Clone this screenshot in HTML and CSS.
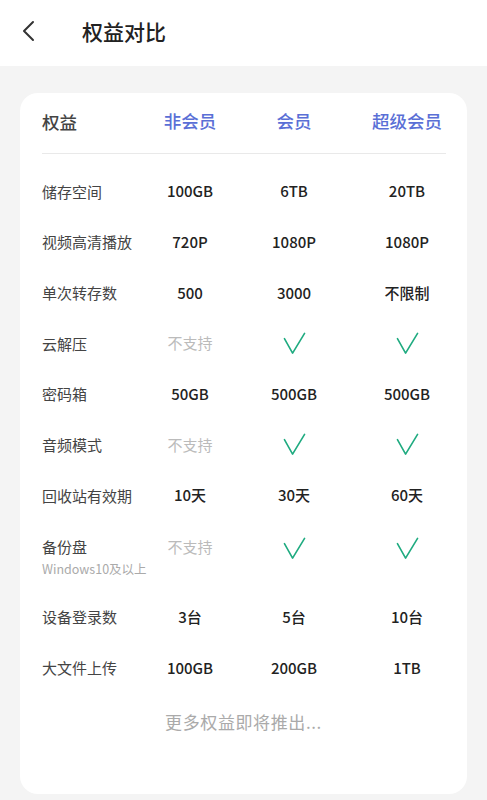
FILE: index.html
```html
<!DOCTYPE html>
<html lang="zh-CN">
<head>
    <meta charset="UTF-8">
    <meta name="viewport" content="width=device-width, initial-scale=1.0">
    <title>权益对比</title>
    <link rel="stylesheet" href="styles.css">
</head>
<body>
    <div class="topbar">
        <svg class="back" width="16" height="22" viewBox="0 0 16 22">
            <path d="M13 2 L4 11 L13 20" fill="none" stroke="#333" stroke-width="2" stroke-linecap="round" stroke-linejoin="round"/>
        </svg>
        <h1>权益对比</h1>
    </div>

    <div class="page">
        <div class="card">
            <div class="row head">
                <div class="label">权益</div>
                <div class="cell">非会员</div>
                <div class="cell">会员</div>
                <div class="cell">超级会员</div>
            </div>
            <div class="divider"></div>

            <div class="rows">
                <div class="row">
                    <div class="label">储存空间</div>
                    <div class="cell">100GB</div>
                    <div class="cell">6TB</div>
                    <div class="cell">20TB</div>
                </div>
                <div class="row">
                    <div class="label">视频高清播放</div>
                    <div class="cell">720P</div>
                    <div class="cell">1080P</div>
                    <div class="cell">1080P</div>
                </div>
                <div class="row">
                    <div class="label">单次转存数</div>
                    <div class="cell">500</div>
                    <div class="cell">3000</div>
                    <div class="cell">不限制</div>
                </div>
                <div class="row">
                    <div class="label">云解压</div>
                    <div class="cell off">不支持</div>
                    <div class="cell"><svg class="check" viewBox="0 0 24 24"><path d="M1.5 7 L10 22 L22.5 1.5"/></svg></div>
                    <div class="cell"><svg class="check" viewBox="0 0 24 24"><path d="M1.5 7 L10 22 L22.5 1.5"/></svg></div>
                </div>
                <div class="row">
                    <div class="label">密码箱</div>
                    <div class="cell">50GB</div>
                    <div class="cell">500GB</div>
                    <div class="cell">500GB</div>
                </div>
                <div class="row">
                    <div class="label">音频模式</div>
                    <div class="cell off">不支持</div>
                    <div class="cell"><svg class="check" viewBox="0 0 24 24"><path d="M1.5 7 L10 22 L22.5 1.5"/></svg></div>
                    <div class="cell"><svg class="check" viewBox="0 0 24 24"><path d="M1.5 7 L10 22 L22.5 1.5"/></svg></div>
                </div>
                <div class="row">
                    <div class="label">回收站有效期</div>
                    <div class="cell">10天</div>
                    <div class="cell">30天</div>
                    <div class="cell">60天</div>
                </div>
                <div class="row tall">
                    <div class="label">备份盘<div class="sub">Windows10及以上</div></div>
                    <div class="cell off">不支持</div>
                    <div class="cell"><svg class="check" viewBox="0 0 24 24"><path d="M1.5 7 L10 22 L22.5 1.5"/></svg></div>
                    <div class="cell"><svg class="check" viewBox="0 0 24 24"><path d="M1.5 7 L10 22 L22.5 1.5"/></svg></div>
                </div>
                <div class="row">
                    <div class="label">设备登录数</div>
                    <div class="cell">3台</div>
                    <div class="cell">5台</div>
                    <div class="cell">10台</div>
                </div>
                <div class="row">
                    <div class="label">大文件上传</div>
                    <div class="cell">100GB</div>
                    <div class="cell">200GB</div>
                    <div class="cell">1TB</div>
                </div>
            </div>

            <div class="more">更多权益即将推出...</div>
        </div>
    </div>
</body>
</html>
```

FILE: styles.css
```css
* {
    box-sizing: border-box;
}

body {
    margin: 0;
    font-family: "Noto Sans CJK SC", "Noto Sans", sans-serif;
    background-color: #f4f4f4;
    color: #222;
    height: 800px;
    overflow: hidden;
}

.topbar {
    height: 66px;
    background-color: #fff;
    display: flex;
    align-items: center;
    padding-left: 20px;
}

.back {
    display: block;
    margin-top: -4px;
}

.topbar h1 {
    margin: -4px 0 0 46px;
    font-size: 21px;
    font-weight: 500;
    color: #222;
}

.page {
    padding: 27px 20px 0 20px;
}

.card {
    background-color: #fff;
    border-radius: 18px;
    padding: 0 0 60px 22px;
    height: 701px;
}

.row {
    display: grid;
    grid-template-columns: 98px 100px 108px 118px;
    align-items: center;
    height: 50.67px;
    font-size: 15px;
}

.row.head {
    height: 56px;
    font-size: 17.5px;
}

.row.head .label {
    color: #444;
    font-weight: 500;
}

.row.head .cell {
    color: #5a6fd6;
    font-weight: 500;
}

.divider {
    height: 1px;
    background-color: #e9e9e9;
    margin: 4px 21px 12px 0;
}

.label {
    color: #444;
    white-space: nowrap;
}

.cell {
    text-align: center;
    font-weight: 500;
    color: #222;
    line-height: 20px;
}

.cell.off {
    color: #bbb;
    font-weight: 400;
}

.row.tall {
    height: 71px;
    align-items: start;
    padding-top: 15px;
}

.row.tall .label,
.row.tall .cell {
    line-height: 21px;
}

.sub {
    font-size: 12.5px;
    line-height: 16px;
    color: #aaa;
    margin-top: 4px;
}

.check {
    display: inline-block;
    width: 23px;
    height: 23px;
    vertical-align: middle;
    fill: none;
    stroke: #1fab80;
    stroke-width: 1.7;
    stroke-linecap: round;
    stroke-linejoin: round;
}

.more {
    text-align: center;
    font-size: 17px;
    line-height: 22px;
    letter-spacing: 0.6px;
    color: #aaa;
    padding-top: 18px;
    margin-left: -22px;
}
```
